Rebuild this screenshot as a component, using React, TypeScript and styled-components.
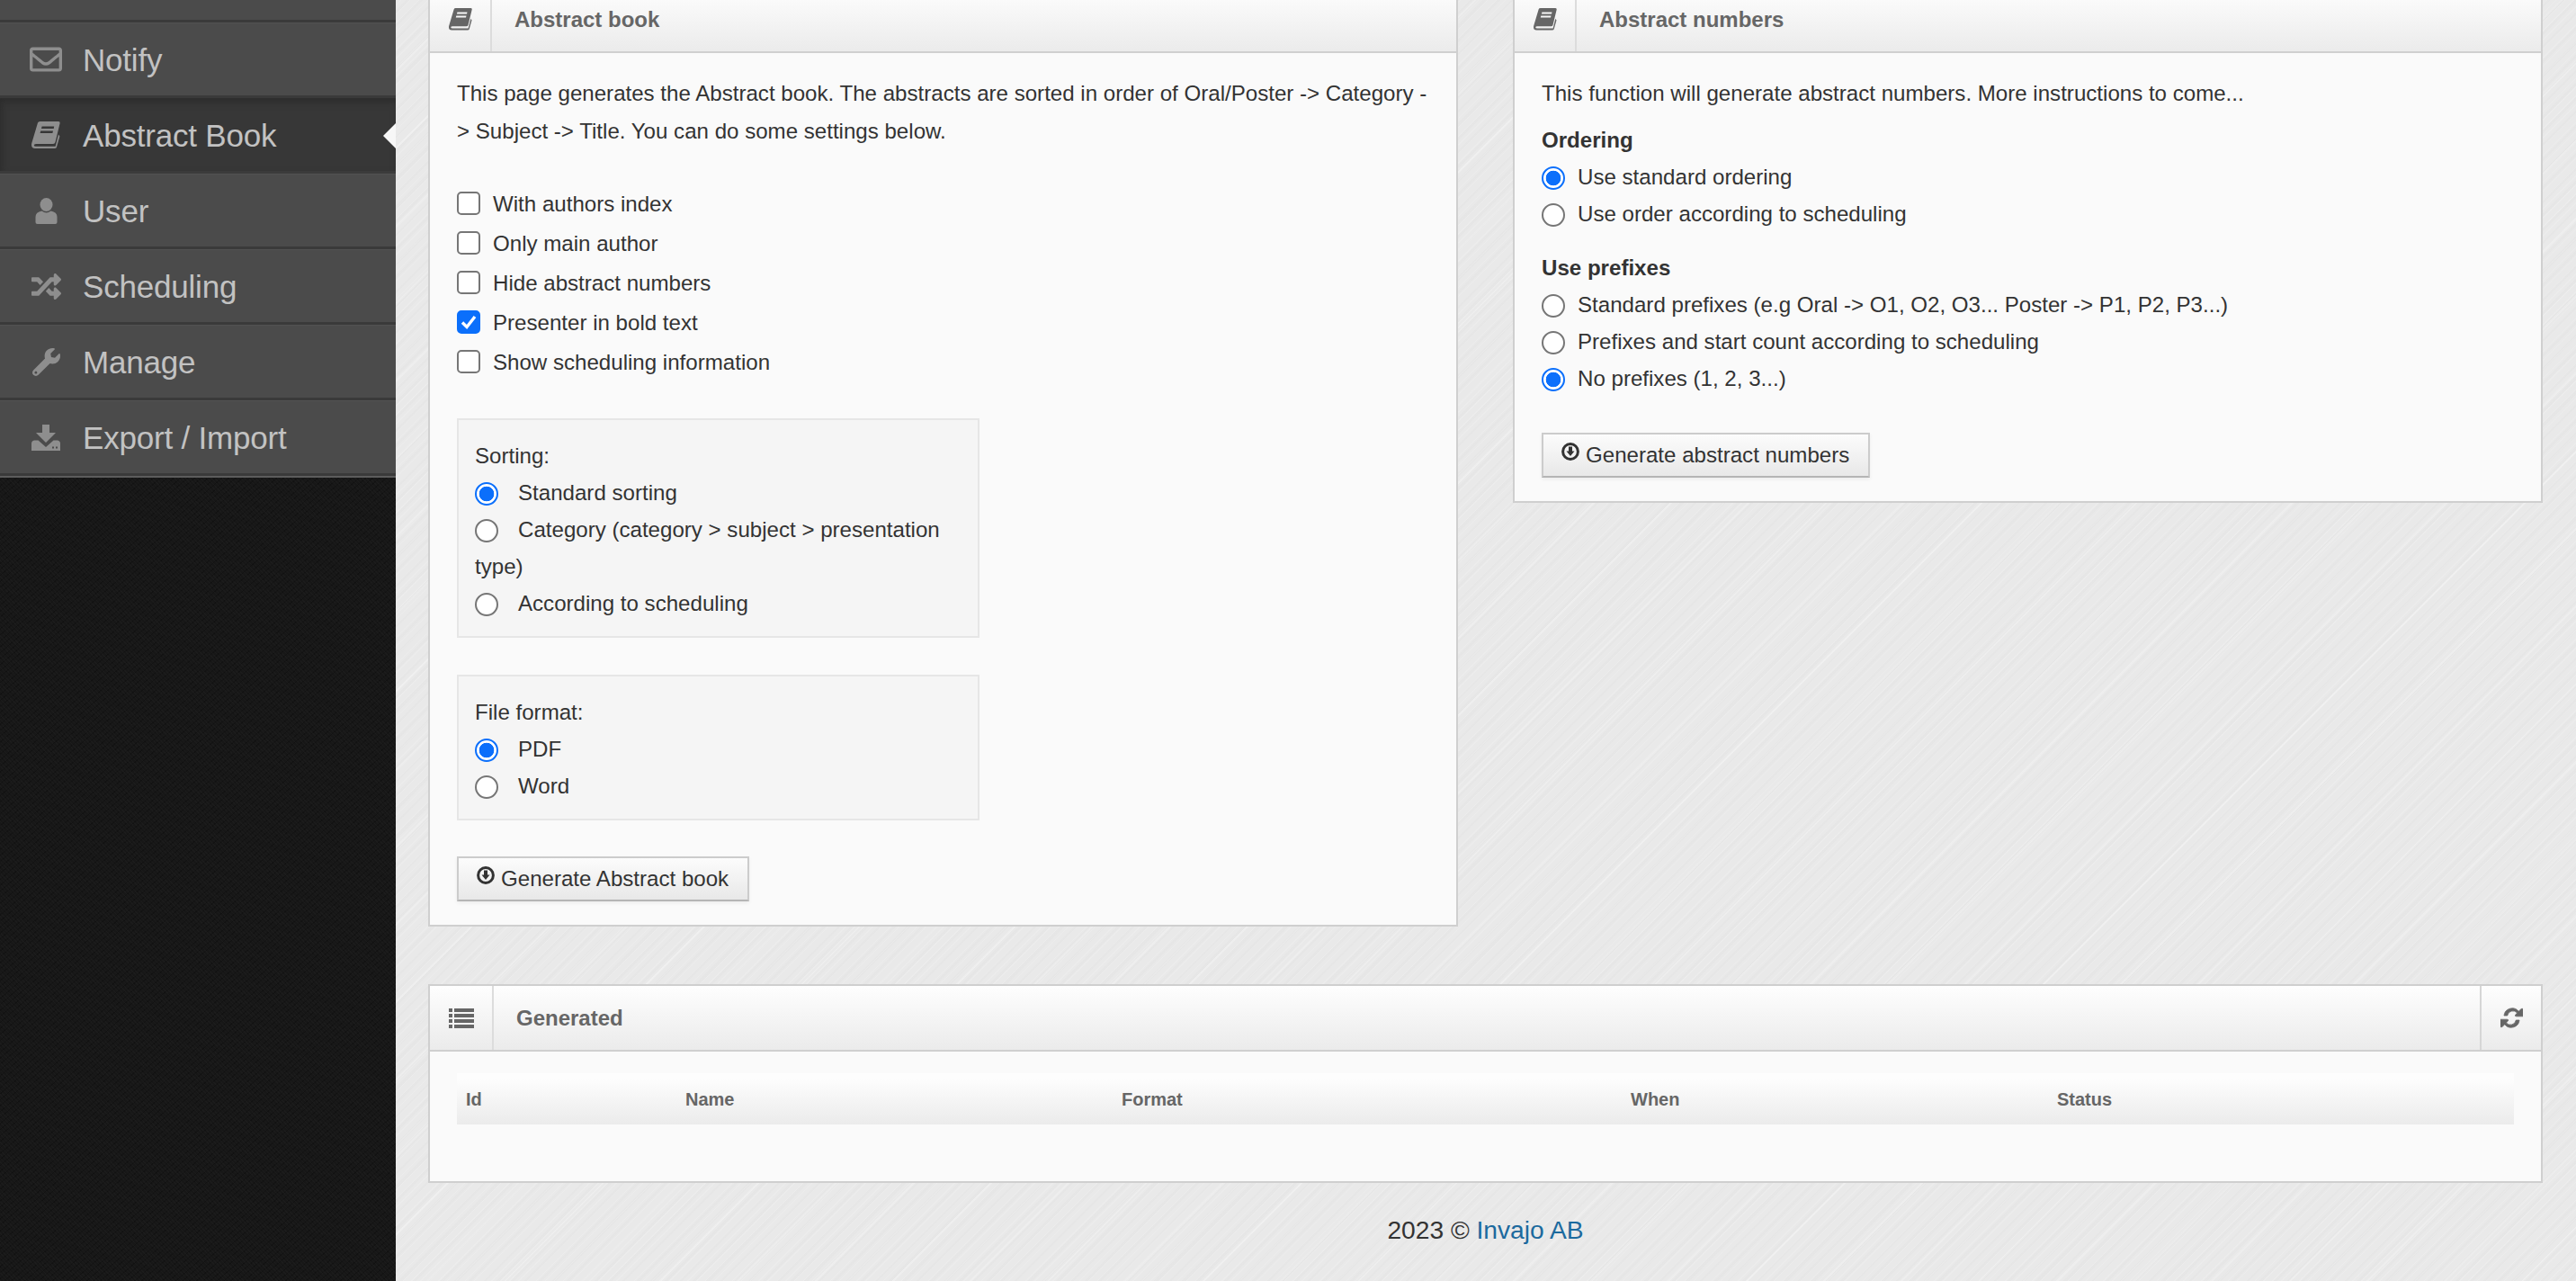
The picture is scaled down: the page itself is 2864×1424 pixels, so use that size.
import { FC, ReactNode } from "react";
import styled, { createGlobalStyle } from "styled-components";
import { FaRegEnvelope, FaRandom, FaWrench } from "react-icons/fa";

// css
const GlobalStyle = createGlobalStyle`
  html, body {
    margin: 0;
    height: 100%;
    overflow: hidden;
  }
  body {
    font-family: "Liberation Sans", Arial, sans-serif;
    font-size: 24.1px;
    line-height: 41px;
    color: #333;
    background-color: #e9e9e9;
    background-image:
      repeating-linear-gradient(135deg, rgba(255, 255, 255, 0.14) 0 1px, transparent 1px 7px),
      repeating-linear-gradient(135deg, rgba(255, 255, 255, 0.22) 0 2px, transparent 2px 61px),
      repeating-linear-gradient(135deg, rgba(0, 0, 0, 0.01) 0 3px, transparent 3px 11px);
  }
`;

const Layout = styled.div`
  display: flex;
  height: 1424px;
  overflow: hidden;
`;

const Sidebar = styled.nav`
  flex: 0 0 440px;
  background-color: #171717;
  background-image:
    repeating-linear-gradient(47deg, rgba(255, 255, 255, 0.018) 0 1px, transparent 1px 3px),
    repeating-linear-gradient(-41deg, rgba(0, 0, 0, 0.22) 0 1px, transparent 1px 5px);
`;

const MenuList = styled.ul`
  list-style: none;
  margin: -59px 0 0;
  padding: 0;
  border-bottom: 2px solid #5c5c5c;
`;

const MenuItem = styled.li<{ $active?: boolean }>`
  position: relative;
  box-sizing: border-box;
  display: flex;
  align-items: center;
  height: 84px;
  background: ${(p) => (p.$active ? "#373737" : "#4b4b4b")};
  border-top: 1px solid ${(p) => (p.$active ? "#2e2e2e" : "#525252")};
  border-bottom: 3px solid ${(p) => (p.$active ? "#3b3b3b" : "#3a3a3a")};
  box-shadow: ${(p) => (p.$active ? "inset 0 6px 10px -4px #2b2b2b, inset 6px 0 10px -6px #2b2b2b" : "none")};
  color: #c2c2c2;
  font-size: 35px;
  letter-spacing: -0.2px;

  ${(p) =>
    p.$active &&
    `
    &::after {
      content: "";
      position: absolute;
      right: 0;
      top: 27px;
      border-style: solid;
      border-width: 14px 14px 14px 0;
      border-color: transparent #f7f7f7 transparent transparent;
    }
  `}
`;

const MenuIcon = styled.span`
  flex: 0 0 92px;
  display: flex;
  justify-content: center;
  padding-left: 10px;
  box-sizing: border-box;
  color: #8e8e8e;

  svg {
    display: block;
  }
`;

const Main = styled.main`
  flex: 1;
  min-width: 0;
  margin-top: -16px;
  padding: 0 37px 0 36px;
`;

const PanelRow = styled.div`
  display: grid;
  grid-template-columns: 1145px 1145px;
  column-gap: 61px;
  align-items: start;
`;

const Panel = styled.section<{ $top?: number }>`
  box-sizing: border-box;
  margin-top: ${(p) => p.$top ?? 0}px;
  background: #fafafa;
  border: 2px solid #cfcfcf;
`;

const PanelHeader = styled.header`
  display: flex;
  align-items: stretch;
  box-sizing: border-box;
  height: 73px;
  background: linear-gradient(#fefefe, #ebebeb);
  border-bottom: 2px solid #cfcfcf;
`;

const HeaderIcon = styled.div<{ $width: number }>`
  box-sizing: border-box;
  flex: 0 0 ${(p) => p.$width}px;
  display: flex;
  align-items: center;
  justify-content: center;
  border-right: 2px solid #dcdcdc;
  color: #666;
`;

const HeaderAction = styled.div`
  box-sizing: border-box;
  flex: 0 0 68px;
  display: flex;
  align-items: center;
  justify-content: center;
  border-left: 2px solid #d6d6d6;
  color: #666;
`;

const HeaderTitle = styled.h2<{ $indent: number }>`
  flex: 1;
  margin: 0;
  padding-left: ${(p) => p.$indent}px;
  font-size: 24px;
  font-weight: bold;
  line-height: 71px;
  color: #666;
`;

const PanelBody = styled.div`
  padding: 24px 30px 26px;
`;

const Paragraph = styled.p`
  margin: 0 0 37px;
  line-height: 42px;
`;

const RightParagraph = styled(Paragraph)`
  margin: 0 0 10px;
`;

const CheckRow = styled.label`
  display: flex;
  align-items: center;
  height: 44px;
  gap: 14px;
`;

const Checkbox = styled.input.attrs({ type: "checkbox" })`
  appearance: none;
  box-sizing: border-box;
  width: 26px;
  height: 26px;
  margin: 0;
  background: #fff;
  border: 2px solid #767676;
  border-radius: 5px;

  &:checked {
    border-color: #0b6ffb;
    background: #0b6ffb url("data:image/svg+xml,%3Csvg xmlns='http://www.w3.org/2000/svg' viewBox='0 0 22 22'%3E%3Cpath d='M4 11.5l5 5L18 5' fill='none' stroke='%23fff' stroke-width='3.4'/%3E%3C/svg%3E") center / 100% no-repeat;
  }
`;

const CheckList = styled.div`
  margin-bottom: 41px;
`;

const OptionBox = styled.fieldset<{ $bottom: number }>`
  box-sizing: border-box;
  width: 581px;
  margin: 0 0 ${(p) => p.$bottom}px;
  padding: 19px 18px 16px;
  min-inline-size: 0;
  background: #f5f5f5;
  border: 2px solid #e6e6e6;
`;

const OptionLine = styled.label`
  display: block;
`;

const Radio = styled.input.attrs({ type: "radio" })<{ $gap: number }>`
  appearance: none;
  box-sizing: border-box;
  width: 26px;
  height: 26px;
  margin: 0 ${(p) => p.$gap}px 0 0;
  vertical-align: -6px;
  background: #fff;
  border: 2px solid #767676;
  border-radius: 50%;

  &:checked {
    border-color: #0b6ffb;
    background: radial-gradient(circle, #0b6ffb 0 8px, #fff 8.6px);
  }
`;

const GroupTitle = styled.div<{ $top?: number }>`
  margin-top: ${(p) => p.$top ?? 0}px;
  font-weight: bold;
`;

const GenerateButton = styled.button<{ $top?: number }>`
  display: inline-flex;
  align-items: center;
  gap: 7px;
  box-sizing: border-box;
  height: 50px;
  margin-top: ${(p) => p.$top ?? 0}px;
  padding: 0 21px 0 20px;
  font-family: inherit;
  font-size: 24.1px;
  color: #333;
  background: linear-gradient(#fcfcfc, #e8e8e8);
  border: 2px solid #cccccc;
  border-bottom-color: #b5b5b5;
  box-shadow: 0 2px 4px rgba(0, 0, 0, 0.06);

  svg {
    position: relative;
    top: -4px;
    display: block;
  }
`;

const Table = styled.table`
  width: 100%;
  margin-bottom: 63px;
  border-collapse: collapse;
  table-layout: fixed;
`;

const HeadRow = styled.tr`
  height: 57px;
  background: linear-gradient(#fdfdfd 12%, #ebebeb);
`;

const HeadCell = styled.th<{ $width?: number }>`
  width: ${(p) => (p.$width ? `${p.$width}px` : "auto")};
  box-sizing: border-box;
  padding: 2px 0 0 10px;
  font-size: 20px;
  font-weight: bold;
  text-align: left;
  color: #666;
`;

const GeneratedBody = styled(PanelBody)`
  padding: 24px 30px 0;
`;

const Footer = styled.footer`
  margin-top: 30px;
  font-size: 28.2px;
  line-height: 44px;
  text-align: center;
  color: #333;
`;

const FooterLink = styled.a`
  color: #1c6a9e;
  text-decoration: none;
`;

// icons
const BookIcon: FC<{ size: number }> = ({ size }) => (
  <svg width={size} height={(size * 30) / 32} viewBox="0 0 32 30" fill="currentColor">
    <path
      fillRule="evenodd"
      d="M7 1.5Q7.5 0 9.5 0H30Q32 0 31.6 2L26.5 23Q26 25 24 25H5Q2.8 25 2.8 26.6Q2.8 27.8 5 27.8H26.6L30 14.5L31.4 16.5L28 28.5Q27.6 30 25.5 30H4Q0 30 0 26Q0 25 .3 24ZM11.6 5.5H25.2L24.7 8H11ZM10.2 10.5H24L23.4 13H9.6Z"
    />
  </svg>
);

const UserIcon: FC = () => (
  <svg width="25" height="29" viewBox="0 0 24 29" fill="currentColor">
    <ellipse cx="12" cy="7.5" rx="7" ry="7.5" />
    <path d="M0 27V21Q0 16 7 14.6Q12 18.5 17 14.6Q24 16 24 21V27Q24 29 22 29H2Q0 29 0 27Z" />
  </svg>
);

const DownloadIcon: FC = () => (
  <svg width="32" height="29" viewBox="0 0 32 29" fill="currentColor">
    <path d="M12 0H20V9H27L16 20L5 9H12Z" />
    <path
      fillRule="evenodd"
      d="M0 21Q0 18 3 17.5H7.5L16 25L24.5 17.5H29Q32 18 32 21V29H0ZM23 24.5V26.5H25V24.5ZM27 24.5V26.5H29V24.5Z"
    />
  </svg>
);

const ListIcon: FC = () => (
  <svg width="28" height="22" viewBox="0 0 28 22" fill="currentColor">
    <path d="M0 0H4V4H0ZM6 0H28V4H6ZM0 6H4V10H0ZM6 6H28V10H6ZM0 12H4V16H0ZM6 12H28V16H6ZM0 18H4V22H0ZM6 18H28V22H6Z" />
  </svg>
);

const RefreshIcon: FC = () => (
  <svg width="25" height="25" viewBox="0 0 24 24" fill="currentColor" stroke="currentColor" strokeWidth="0.7">
    <path d="M3.8 9.6A8.8 8.8 0 0 1 19.4 5L22.2 2.4Q24 1.4 24 3.4V10.4H17Q15 10.4 16 8.6L17.9 6.8A6 6 0 0 0 7.4 9.6Z" />
    <path d="M20.2 14.4A8.8 8.8 0 0 1 4.6 19L1.8 21.6Q0 22.6 0 20.6V13.6H7Q9 13.6 8 15.4L6.1 17.2A6 6 0 0 0 16.6 14.4Z" />
  </svg>
);

const CircleDownIcon: FC = () => (
  <svg width="20" height="20" viewBox="0 0 20 20">
    <circle cx="10" cy="10" r="8.4" fill="none" stroke="#333" strokeWidth="3" />
    <path d="M8 4.5H12V9.5H14.5L10 15L5.5 9.5H8Z" fill="#333" />
  </svg>
);

// data
type MenuEntry = { label: string; icon: ReactNode; active?: boolean };

const menu: MenuEntry[] = [
  { label: "", icon: null },
  { label: "Notify", icon: <FaRegEnvelope size={36} /> },
  { label: "Abstract Book", icon: <BookIcon size={32} />, active: true },
  { label: "User", icon: <UserIcon /> },
  { label: "Scheduling", icon: <FaRandom size={33} /> },
  { label: "Manage", icon: <FaWrench size={31} /> },
  { label: "Export / Import", icon: <DownloadIcon /> },
];

const checks = [
  { label: "With authors index" },
  { label: "Only main author" },
  { label: "Hide abstract numbers" },
  { label: "Presenter in bold text", checked: true },
  { label: "Show scheduling information" },
];

const columns = [
  { label: "Id", width: 244 },
  { label: "Name", width: 485 },
  { label: "Format", width: 566 },
  { label: "When", width: 474 },
  { label: "Status" },
];

const RadioLine: FC<{ name: string; gap: number; checked?: boolean; children: ReactNode }> = ({
  name,
  gap,
  checked,
  children,
}) => (
  <OptionLine>
    <Radio name={name} $gap={gap} defaultChecked={checked} />
    {children}
  </OptionLine>
);

export default function App() {
  return (
    <Layout>
      <GlobalStyle />
      <Sidebar>
        <MenuList>
          {menu.map((item, index) => (
            <MenuItem key={`menu-${index}`} $active={item.active}>
              <MenuIcon>{item.icon}</MenuIcon>
              {item.label}
            </MenuItem>
          ))}
        </MenuList>
      </Sidebar>
      <Main>
        <PanelRow>
          <Panel>
            <PanelHeader>
              <HeaderIcon $width={69}>
                <BookIcon size={26} />
              </HeaderIcon>
              <HeaderTitle $indent={25}>Abstract book</HeaderTitle>
            </PanelHeader>
            <PanelBody>
              <Paragraph>
                This page generates the Abstract book. The abstracts are sorted in order of Oral/Poster -&gt; Category
                -&gt; Subject -&gt; Title. You can do some settings below.
              </Paragraph>
              <CheckList>
                {checks.map((check) => (
                  <CheckRow key={check.label}>
                    <Checkbox defaultChecked={check.checked} />
                    {check.label}
                  </CheckRow>
                ))}
              </CheckList>
              <OptionBox $bottom={41}>
                <div>Sorting:</div>
                <RadioLine name="sorting" gap={22} checked>
                  Standard sorting
                </RadioLine>
                <RadioLine name="sorting" gap={22}>
                  Category (category &gt; subject &gt; presentation type)
                </RadioLine>
                <RadioLine name="sorting" gap={22}>
                  According to scheduling
                </RadioLine>
              </OptionBox>
              <OptionBox $bottom={40}>
                <div>File format:</div>
                <RadioLine name="format" gap={22} checked>
                  PDF
                </RadioLine>
                <RadioLine name="format" gap={22}>
                  Word
                </RadioLine>
              </OptionBox>
              <GenerateButton>
                <CircleDownIcon />
                Generate Abstract book
              </GenerateButton>
            </PanelBody>
          </Panel>
          <Panel>
            <PanelHeader>
              <HeaderIcon $width={69}>
                <BookIcon size={26} />
              </HeaderIcon>
              <HeaderTitle $indent={25}>Abstract numbers</HeaderTitle>
            </PanelHeader>
            <PanelBody>
              <RightParagraph>This function will generate abstract numbers. More instructions to come...</RightParagraph>
              <GroupTitle>Ordering</GroupTitle>
              <RadioLine name="ordering" gap={14} checked>
                Use standard ordering
              </RadioLine>
              <RadioLine name="ordering" gap={14}>
                Use order according to scheduling
              </RadioLine>
              <GroupTitle $top={19}>Use prefixes</GroupTitle>
              <RadioLine name="prefixes" gap={14}>
                Standard prefixes (e.g Oral -&gt; O1, O2, O3... Poster -&gt; P1, P2, P3...)
              </RadioLine>
              <RadioLine name="prefixes" gap={14}>
                Prefixes and start count according to scheduling
              </RadioLine>
              <RadioLine name="prefixes" gap={14} checked>
                No prefixes (1, 2, 3...)
              </RadioLine>
              <GenerateButton $top={40}>
                <CircleDownIcon />
                Generate abstract numbers
              </GenerateButton>
            </PanelBody>
          </Panel>
        </PanelRow>
        <Panel $top={64}>
          <PanelHeader>
            <HeaderIcon $width={71}>
              <ListIcon />
            </HeaderIcon>
            <HeaderTitle $indent={25}>Generated</HeaderTitle>
            <HeaderAction>
              <RefreshIcon />
            </HeaderAction>
          </PanelHeader>
          <GeneratedBody>
            <Table>
              <thead>
                <HeadRow>
                  {columns.map((column) => (
                    <HeadCell key={column.label} $width={column.width}>
                      {column.label}
                    </HeadCell>
                  ))}
                </HeadRow>
              </thead>
            </Table>
          </GeneratedBody>
        </Panel>
        <Footer>
          2023 © <FooterLink href="#">Invajo AB</FooterLink>
        </Footer>
      </Main>
    </Layout>
  );
}
